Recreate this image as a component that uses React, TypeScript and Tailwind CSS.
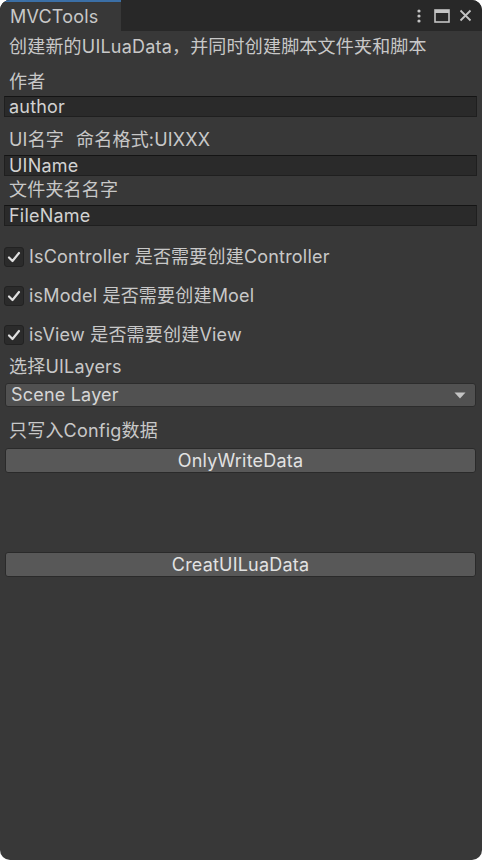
import type { ReactNode } from 'react';

const font = { fontFamily: 'Inter, "Noto Sans CJK SC", sans-serif' };

function Label({ children, className = '' }: { children: ReactNode; className?: string }) {
  return (
    <div className={`flex h-[24px] items-center pl-[9px] text-[18px] leading-none text-[#c8c8c8] ${className}`}>
      {children}
    </div>
  );
}

function TextField({ value, className = '' }: { value: string; className?: string }) {
  return (
    <div
      className={`ml-[4px] mr-[5px] flex h-[21px] items-center border border-[#1f1f1f] border-t-[#141414] bg-[#2a2a2a] pl-[4px] text-[18px] leading-none text-[#d2d2d2] ${className}`}
    >
      {value}
    </div>
  );
}

function Toggle({ label, className = '' }: { label: string; className?: string }) {
  return (
    <div className={`flex h-[24px] items-center pl-[4px] ${className}`}>
      <div className="flex h-[20px] w-[20px] items-center justify-center rounded-[3px] border border-[#222] bg-[#2b2b2b]">
        <svg width="14" height="12" viewBox="0 0 14 12" fill="none">
          <path d="M2 6.5 L5.5 10 L12 2" stroke="#e0e0e0" strokeWidth="2.2" strokeLinecap="round" strokeLinejoin="round" />
        </svg>
      </div>
      <span className="ml-[5px] text-[18px] leading-none text-[#c8c8c8]">{label}</span>
    </div>
  );
}

function Btn({ children, className = '' }: { children: ReactNode; className?: string }) {
  return (
    <div
      className={`ml-[5px] mr-[6px] flex h-[25px] items-center justify-center rounded-[3px] border border-[#2a2a2a] bg-[#585858] text-[18px] leading-none text-[#e2e2e2] ${className}`}
    >
      {children}
    </div>
  );
}

export default function App() {
  return (
    <div className="h-[860px] w-[482px] bg-white tracking-[0.2px]" style={font}>
      <div className="flex h-full flex-col overflow-hidden rounded-[10px] bg-[#383838]">
        {/* tab bar */}
        <div className="flex h-[31px] shrink-0 items-stretch bg-[#282828]">
          <div className="flex w-[121px] items-center border-t-2 border-[#3b6fa6] bg-[#383838] pl-[10px] text-[18px] leading-none text-[#c8c8c8]">
            MVCTools
          </div>
          <div className="flex-1" />
          <div className="flex items-center gap-[9px] pr-[10px] text-[#c4c4c4]">
            <svg width="4" height="14" viewBox="0 0 4 14" fill="#c4c4c4">
              <circle cx="2" cy="2" r="1.6" />
              <circle cx="2" cy="7" r="1.6" />
              <circle cx="2" cy="12" r="1.6" />
            </svg>
            <svg width="16" height="14" viewBox="0 0 16 14" fill="none" className="ml-[4px]">
              <rect x="1" y="1" width="14" height="12" stroke="#c4c4c4" strokeWidth="1.6" />
              <rect x="1" y="1" width="14" height="3" fill="#c4c4c4" />
            </svg>
            <svg width="13" height="13" viewBox="0 0 13 13" fill="none">
              <path d="M1.5 1.5 L11.5 11.5 M11.5 1.5 L1.5 11.5" stroke="#c4c4c4" strokeWidth="1.8" />
            </svg>
          </div>
        </div>

        {/* body */}
        <div className="flex h-[32px] items-center pl-[9px] text-[18px] leading-none text-[#c8c8c8]">
          创建新的UILuaData，并同时创建脚本文件夹和脚本
        </div>

        <Label className="mt-[7px]">作者</Label>
        <TextField value="author" className="mt-[2px]" />

        <Label className="mt-[11px]">
          <span>UI名字</span>
          <span className="ml-[12px]">命名格式:UIXXX</span>
        </Label>
        <TextField value="UIName" className="mt-[3px]" />

        <Label className="mt-[2px]">文件夹名名字</Label>
        <TextField value="FileName" className="mt-[3px]" />

        <Toggle label="IsController 是否需要创建Controller" className="mt-[19px]" />
        <Toggle label="isModel 是否需要创建Moel" className="mt-[15px]" />
        <Toggle label="isView 是否需要创建View" className="mt-[15px]" />

        <Label className="mt-[8px]">选择UILayers</Label>
        <div className="ml-[5px] mr-[6px] mt-[4px] flex h-[24px] items-center justify-between rounded-[3px] border border-[#2c2c2c] bg-[#515151] pl-[5px] pr-[9px] text-[18px] leading-none text-[#d6d6d6]">
          <span>Scene Layer</span>
          <svg width="12" height="7" viewBox="0 0 12 7">
            <path d="M0.5 0.5 L11.5 0.5 L6 6.5 Z" fill="#c4c4c4" />
          </svg>
        </div>

        <Label className="mt-[12px]">只写入Config数据</Label>
        <Btn className="mt-[5px]">OnlyWriteData</Btn>

        <Btn className="mt-[79px]">CreatUILuaData</Btn>
      </div>
    </div>
  );
}
